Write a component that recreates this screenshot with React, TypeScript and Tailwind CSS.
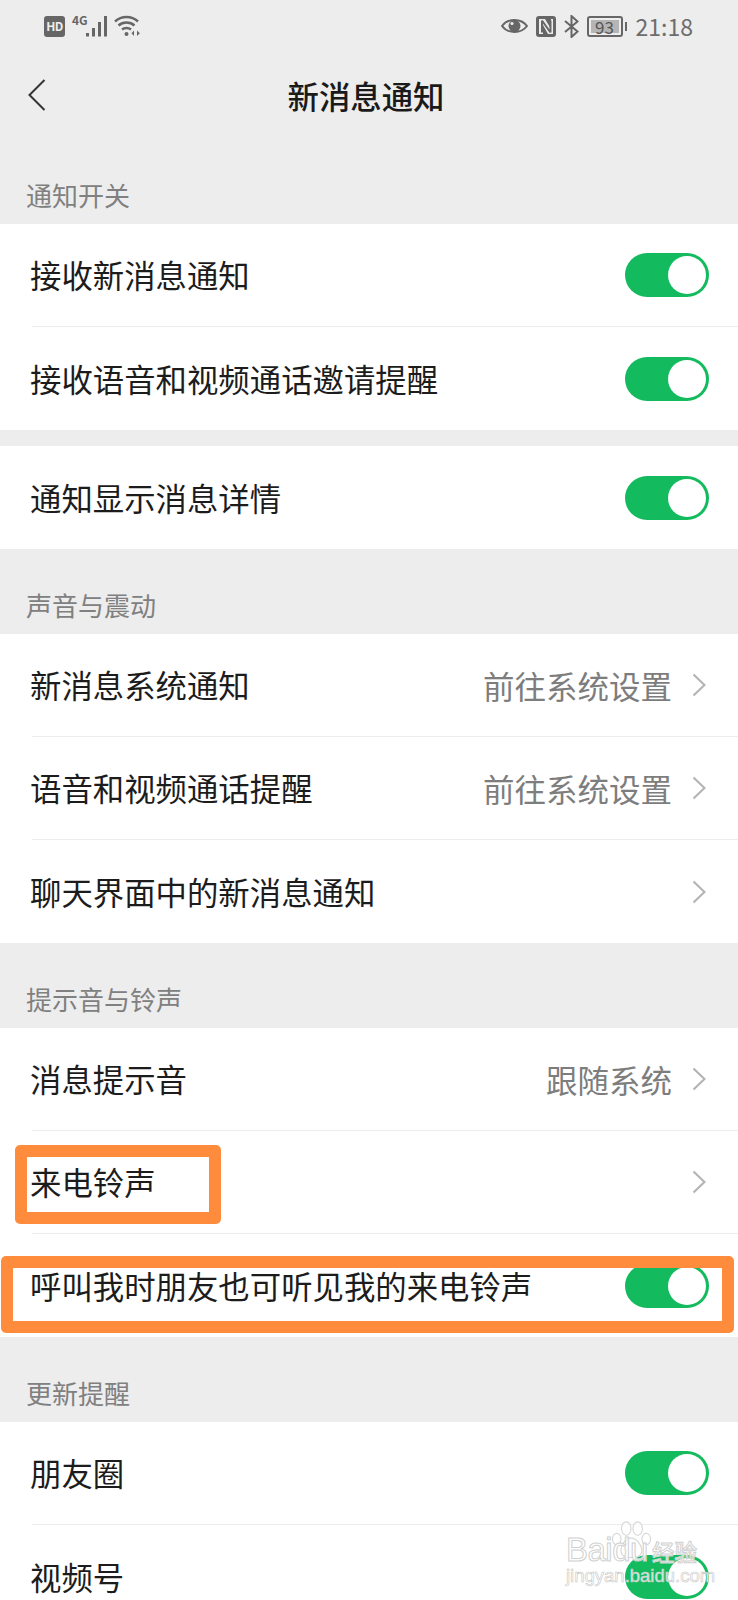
import React from 'react';

function Toggle() {
  return (
    <div className="flex h-[44px] w-[84px] items-center justify-end rounded-full bg-[#13bb5e] pr-[3px]">
      <div className="h-[38px] w-[38px] rounded-full bg-white" />
    </div>
  );
}

function Chevron() {
  return (
    <svg width="14" height="24" viewBox="0 0 14 24" fill="none" className="ml-[20px] mr-[3px]">
      <path d="M1.5 1.5 L12.5 12 L1.5 22.5" stroke="#b4b4b4" strokeWidth="2.2" />
    </svg>
  );
}

interface RowProps {
  label: string;
  value?: string;
  toggle?: boolean;
  divider?: boolean;
}

function Row({ label, value, toggle, divider }: RowProps) {
  return (
    <div className="pl-[32px]">
      <div className={`flex h-[103px] items-center pr-[29px] ${divider ? 'border-b border-[#ececec]' : ''}`}>
        <span className="ml-[-2px] flex-1 text-[31.4px] leading-[40px] text-[#1c1c1c]">{label}</span>
        {value && <span className="text-[31.5px] leading-[40px] text-[#7d7d7d]">{value}</span>}
        {toggle ? <Toggle /> : <Chevron />}
      </div>
    </div>
  );
}

function SectionLabel({ title, tall }: { title: string; tall?: boolean }) {
  return (
    <div className={`flex items-end pb-[12px] pl-[26px] text-[26px] leading-[34px] text-[#808080] ${tall ? 'h-[85px]' : 'h-[84px]'}`}>
      {title}
    </div>
  );
}

function StatusBar() {
  return (
    <div className="flex h-[52px] items-center pl-[44px] pr-[45px] text-[#666666]">
      <div className="flex h-[21px] w-[21px] items-center justify-center rounded-[3px] bg-[#666666] text-[12px] font-bold leading-none tracking-[-0.5px] text-[#ededed]">
        HD
      </div>
      <div className="ml-[7px] h-[22px] self-start pt-[14px] text-[12px] font-bold leading-[11px]">4G</div>
      <svg width="22" height="21" viewBox="0 0 22 21" className="ml-[-2px]" fill="#666666">
        <rect x="0" y="17" width="3" height="3.5" />
        <rect x="6" y="12" width="3" height="8.5" />
        <rect x="12" y="6" width="3" height="14.5" />
        <rect x="18" y="0" width="3" height="20.5" />
      </svg>
      <svg width="27" height="22" viewBox="0 0 27 22" className="ml-[6px]" fill="none" stroke="#666666" strokeWidth="2.4">
        <path d="M1 6.5 C7.5 0.5 17.5 0.5 24 6.5" />
        <path d="M4.5 10.5 C9 6.5 16 6.5 20.5 10.5" />
        <path d="M8 14.5 C10.5 12.5 14.5 12.5 17 14.5" />
        <circle cx="12.5" cy="19" r="2" fill="#666666" stroke="none" />
        <path d="M20 15.5 V21 L17.5 18.2 Z" fill="#666666" stroke="none" />
        <path d="M23 15.5 V21 L25.8 18.2 Z" fill="#666666" stroke="none" />
      </svg>
      <div className="flex-1" />
      <svg width="27" height="18" viewBox="0 0 27 18" fill="none">
        <path d="M1 9 C7 1 20 1 26 9 C20 17 7 17 1 9 Z" stroke="#666666" strokeWidth="2" />
        <circle cx="13.5" cy="9" r="6" fill="#666666" />
        <circle cx="11" cy="6.5" r="1.6" fill="#ededed" />
      </svg>
      <svg width="20" height="21" viewBox="0 0 20 21" className="ml-[8px]">
        <rect width="20" height="21" rx="3" fill="#666666" />
        <path d="M5 3 H9 L15 13 V3 H17 V18 H12 L7 9 V18 H3 V3 Z" fill="#ededed" />
        <path d="M6 4.5 V16.5 M14.5 4.5 V16.5 M6 4.5 L14.5 16.5" stroke="#666666" strokeWidth="2" fill="none" />
      </svg>
      <svg width="15" height="23" viewBox="0 0 15 23" className="ml-[8px]" fill="none" stroke="#666666" strokeWidth="2">
        <path d="M1 6 L13.5 16.5 L7.5 22 V1 L13.5 6.5 L1 17" />
      </svg>
      <div className="ml-[8px] flex h-[21px] w-[36px] items-center rounded-[3px] border-2 border-[#666666] p-[2px]">
        <div className="flex h-full w-full items-center justify-center bg-[#b5b5b5] text-[17px] leading-none text-[#555555]">
          93
        </div>
      </div>
      <div className="ml-[2px] h-[9px] w-[2px] bg-[#666666]" />
      <div className="ml-[9px] text-[23px] leading-[30px] text-[#6c6c6c]">21:18</div>
    </div>
  );
}

function Header() {
  return (
    <div className="relative flex h-[88px] items-center justify-center">
      <svg width="18" height="32" viewBox="0 0 18 32" fill="none" className="absolute left-[28px] top-[27px]">
        <path d="M16.5 1 L1.5 16 L16.5 31" stroke="#333333" strokeWidth="2" />
      </svg>
      <span className="pr-[6px] text-[31.4px] font-medium leading-[40px] text-[#1a1a1a]">新消息通知</span>
    </div>
  );
}

function Watermark() {
  return (
    <div className="absolute left-[566px] top-[1520px] h-[66px] w-[134px] text-white/80">
      <svg width="40" height="40" viewBox="0 0 42 42" fill="rgba(255,255,255,0.7)" stroke="#d8d8d8" strokeWidth="1.2" className="absolute left-[45px] top-0">
        <ellipse cx="6" cy="20" rx="4.5" ry="6" />
        <ellipse cx="16" cy="9" rx="5" ry="7" />
        <ellipse cx="28" cy="9" rx="5" ry="7" />
        <ellipse cx="37" cy="20" rx="4.5" ry="6" />
        <path d="M21 19 C14 19 9 29 11 35 C14 41 29 41 32 35 C34 29 28 19 21 19 Z" />
      </svg>
      <div className="absolute left-0 top-[15px] whitespace-nowrap font-['Liberation_Sans',sans-serif] text-[33px] leading-[30px] tracking-[-0.5px] [-webkit-text-stroke:1px_#d0d0d0]">
        Baidu
      </div>
      <div className="absolute left-[86px] top-[18px] whitespace-nowrap text-[22.5px] font-medium leading-[26px] [-webkit-text-stroke:1px_#d0d0d0]">
        经验
      </div>
      <div className="absolute left-0 top-[46px] whitespace-nowrap font-['Liberation_Sans',sans-serif] text-[18.5px] leading-[20px] [-webkit-text-stroke:0.6px_#c8c8c8]">
        jingyan.baidu.com
      </div>
    </div>
  );
}

export default function App() {
  return (
    <div className="relative h-[1600px] w-[738px] overflow-hidden bg-[#ededed] font-['Noto_Sans_CJK_SC','Noto_Sans',sans-serif]">
      <StatusBar />
      <Header />

      <div className="flex h-[84px] items-end pb-[12px] pl-[26px] text-[26px] leading-[34px] text-[#808080]">通知开关</div>
      <div className="bg-white">
        <Row label="接收新消息通知" toggle divider />
        <Row label="接收语音和视频通话邀请提醒" toggle />
      </div>

      <div className="h-[16px]" />
      <div className="bg-white">
        <Row label="通知显示消息详情" toggle />
      </div>

      <SectionLabel title="声音与震动" tall />
      <div className="bg-white">
        <Row label="新消息系统通知" value="前往系统设置" divider />
        <Row label="语音和视频通话提醒" value="前往系统设置" divider />
        <Row label="聊天界面中的新消息通知" />
      </div>

      <SectionLabel title="提示音与铃声" tall />
      <div className="bg-white">
        <Row label="消息提示音" value="跟随系统" divider />
        <Row label="来电铃声" divider />
        <Row label="呼叫我时朋友也可听见我的来电铃声" toggle />
      </div>

      <SectionLabel title="更新提醒" tall />
      <div className="bg-white">
        <Row label="朋友圈" toggle divider />
        <Row label="视频号" toggle />
      </div>

      {/* оранжевые рамки поверх скриншота */}
      <div className="absolute left-[15px] top-[1145px] h-[79px] w-[206px] rounded-[5px] border-[12px] border-[#ff8b3d]" />
      <div className="absolute left-[1px] top-[1256px] h-[77px] w-[733px] rounded-[5px] border-[12px] border-[#ff8b3d]" />

      <Watermark />
    </div>
  );
}
